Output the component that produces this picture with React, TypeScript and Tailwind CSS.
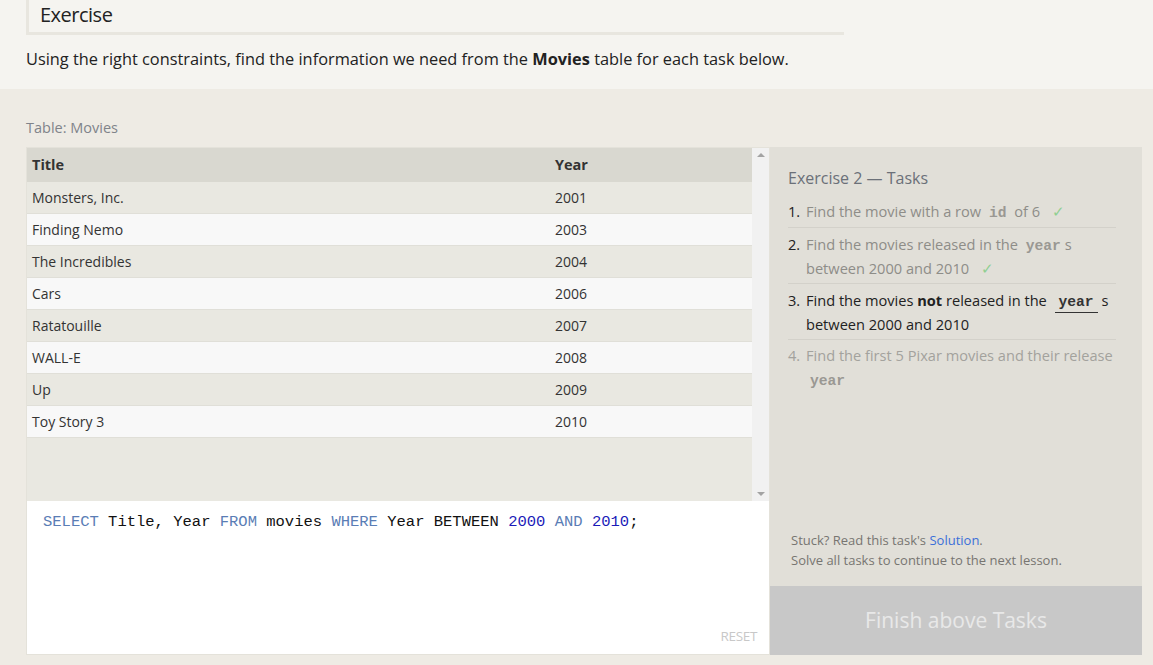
const movies = [
  { title: "Monsters, Inc.", year: 2001 },
  { title: "Finding Nemo", year: 2003 },
  { title: "The Incredibles", year: 2004 },
  { title: "Cars", year: 2006 },
  { title: "Ratatouille", year: 2007 },
  { title: "WALL-E", year: 2008 },
  { title: "Up", year: 2009 },
  { title: "Toy Story 3", year: 2010 },
];

const sans = "font-['Open_Sans',sans-serif]";
const mono = "font-['Liberation_Mono',monospace]";

function Check() {
  return <span className="ml-3 text-[#8fcf92]">✓</span>;
}

function Code({ children, active }: { children: string; active?: boolean }) {
  return (
    <span
      className={
        active
          ? `${mono} ml-1 border-b border-[#333] px-[4px] pb-[2px] leading-[16px] font-bold text-[#333]`
          : `${mono} mx-1 leading-[16px] font-bold text-[#9a9893]`
      }
    >
      {children}
    </span>
  );
}

export default function App() {
  return (
    <div className={`${sans} min-h-[665px] bg-[#f5f4f0] text-[#222]`}>
      <div className="px-[26px]">
        <div className="w-[818px] border-b-[3px] border-l-[3px] border-[#e8e6df] pl-[11px] pt-[2px] pb-[4px] text-[20px] leading-[26px] tracking-tight">
          Exercise
        </div>
        <p className="mt-[12px] pb-[18px] text-[16.35px] leading-[24px]">
          Using the right constraints, find the information we need from the <b>Movies</b> table for each task
          below.
        </p>
      </div>

      <div className="bg-[#eeebe4] pl-[26px] pr-[11px] pt-[29px] pb-[10px]">
        <div className="pb-[9px] text-[14.5px] leading-[20px] text-[#80838a]">Table: Movies</div>
        <div className="flex">
          <div className="flex w-[744px] flex-col border border-[#e4e2da]">
            <div className="flex h-[353px] bg-[#e9e8e1]">
              <div className="flex-1">
                <div className="flex h-[34px] items-center bg-[#d9d8d0] text-[14.5px] font-bold text-[#333]">
                  <div className="w-[528px] pl-[5px]">Title</div>
                  <div>Year</div>
                </div>
                {movies.map((m, i) => (
                  <div
                    key={m.title}
                    className={`flex h-[32px] items-center border-b border-[#e0dfd8] text-[14px] text-[#333] ${
                      i % 2 === 0 ? "bg-[#e9e8e1]" : "bg-[#f8f8f8]"
                    }`}
                  >
                    <div className="w-[528px] pl-[5px]">{m.title}</div>
                    <div>{m.year}</div>
                  </div>
                ))}
              </div>
              <div className="flex w-[17px] flex-col items-center justify-between bg-[#f1f1f1] py-[5px]">
                <span className="h-0 w-0 border-x-[4px] border-b-[4px] border-x-transparent border-b-[#a3a3a3]" />
                <span className="h-0 w-0 border-x-[4px] border-t-[4px] border-x-transparent border-t-[#a3a3a3]" />
              </div>
            </div>
            <div className="flex h-[153px] flex-col justify-between bg-white pb-[8px] pl-[16px] pr-[12px] pt-[10px]">
              <div className={`${mono} text-[15.5px] leading-[22px] text-[#111]`}>
                <span className="text-[#5a7db5]">SELECT</span> Title, Year{" "}
                <span className="text-[#5a7db5]">FROM</span> movies{" "}
                <span className="text-[#5a7db5]">WHERE</span> Year BETWEEN{" "}
                <span className="text-[#1a1ab8]">2000</span> <span className="text-[#5a7db5]">AND</span>{" "}
                <span className="text-[#1a1ab8]">2010</span>;
              </div>
              <div className="self-end text-[13.5px] tracking-tight text-[#c8c8c8]">RESET</div>
            </div>
          </div>

          <div className="flex w-[372px] flex-col">
            <div className="flex flex-1 flex-col justify-between bg-[#e1dfd8] px-[18px] pb-[16px] pt-[20px]">
              <div>
                <div className="text-[16px] leading-[22px] text-[#6b7078]">Exercise 2 — Tasks</div>
                <ol className="mt-[10px] pr-[8px] text-[14.6px] leading-[24px]">
                  <li className="flex border-b border-[#d3d1ca] pb-[4px]">
                    <span className="w-[18px] shrink-0 text-[#222]">1.</span>
                    <span className="text-[#8e8d88]">
                      Find the movie with a row <Code>id</Code> of 6
                      <Check />
                    </span>
                  </li>
                  <li className="flex border-b border-[#d3d1ca] pb-[3px] pt-[4px]">
                    <span className="w-[18px] shrink-0 text-[#222]">2.</span>
                    <span className="text-[#8e8d88]">
                      Find the movies released in the <Code>year</Code>s between 2000 and 2010
                      <Check />
                    </span>
                  </li>
                  <li className="flex border-b border-[#d3d1ca] pb-[3px] pt-[4px]">
                    <span className="w-[18px] shrink-0 text-[#222]">3.</span>
                    <span className="text-[#222]">
                      Find the movies <b>not</b> released in the <Code active>year</Code> s between 2000 and 2010
                    </span>
                  </li>
                  <li className="flex pt-[3px] text-[#a3a29d]">
                    <span className="w-[18px] shrink-0">4.</span>
                    <span>
                      Find the first 5 Pixar movies and their release <Code>year</Code>
                    </span>
                  </li>
                </ol>
              </div>
              <div className="pl-[3px] text-[13px] leading-[20px] text-[#777571]">
                <div>
                  Stuck? Read this task's <span className="text-[#3b6fd8]">Solution</span>.
                </div>
                <div>Solve all tasks to continue to the next lesson.</div>
              </div>
            </div>
            <div className="flex h-[69px] items-center justify-center bg-[#c8c8c8] text-[21px] text-[#e8e8e8]">
              Finish above Tasks
            </div>
          </div>
        </div>
      </div>
    </div>
  );
}
